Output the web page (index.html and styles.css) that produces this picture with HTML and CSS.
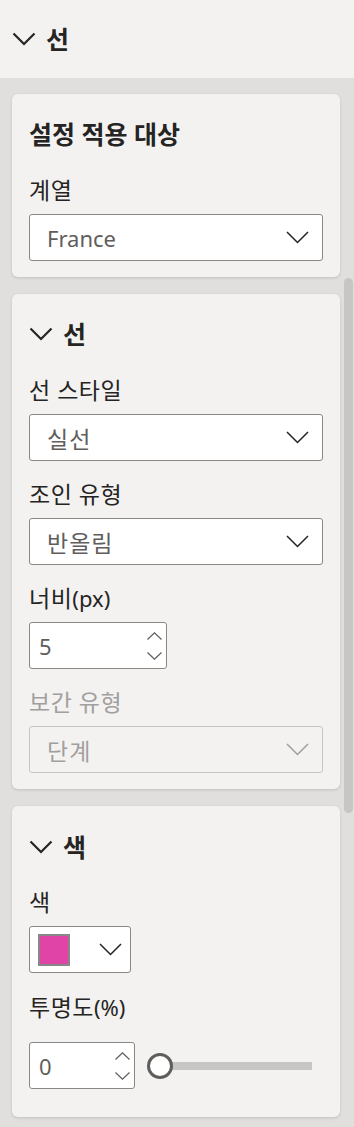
FILE: index.html
```html
<!DOCTYPE html>
<html lang="ko">
<head>
<meta charset="utf-8">
<link rel="stylesheet" href="styles.css">
</head>
<body>
<div class="page">
  <header class="top">
    <svg class="chev-lg" width="24" height="14" viewBox="0 0 24 14"><path d="M1.5 1.5 L12 12 L22.5 1.5"/></svg>
    <span class="top-title">선</span>
  </header>
  <main class="pane">
    <section class="card">
      <h2 class="card-title">설정 적용 대상</h2>
      <div class="field field-first">
        <div class="label">계열</div>
        <div class="dropdown"><span>France</span><svg class="chev-sm" width="23" height="13" viewBox="0 0 23 13"><path d="M1 1 L11.5 11.5 L22 1"/></svg></div>
      </div>
    </section>

    <section class="card">
      <div class="card-head">
        <svg class="chev-lg" width="24" height="14" viewBox="0 0 24 14"><path d="M1.5 1.5 L12 12 L22.5 1.5"/></svg>
        <span class="card-title">선</span>
      </div>
      <div class="field field-first">
        <div class="label">선 스타일</div>
        <div class="dropdown"><span class="ko">실선</span><svg class="chev-sm" width="23" height="13" viewBox="0 0 23 13"><path d="M1 1 L11.5 11.5 L22 1"/></svg></div>
      </div>
      <div class="field">
        <div class="label">조인 유형</div>
        <div class="dropdown"><span class="ko">반올림</span><svg class="chev-sm" width="23" height="13" viewBox="0 0 23 13"><path d="M1 1 L11.5 11.5 L22 1"/></svg></div>
      </div>
      <div class="field">
        <div class="label">너비<span class="lat">(px)</span></div>
        <div class="spin spin-wide">
          <span class="spin-value">5</span>
          <div class="spin-arrows">
            <svg width="15" height="8" viewBox="0 0 15 8"><path d="M0.5 7.5 L7.5 0.8 L14.5 7.5"/></svg>
            <svg width="15" height="8" viewBox="0 0 15 8"><path d="M0.5 0.5 L7.5 7.2 L14.5 0.5"/></svg>
          </div>
        </div>
      </div>
      <div class="field disabled">
        <div class="label">보간 유형</div>
        <div class="dropdown"><span class="ko">단계</span><svg class="chev-sm" width="23" height="13" viewBox="0 0 23 13"><path d="M1 1 L11.5 11.5 L22 1"/></svg></div>
      </div>
    </section>

    <section class="card card-last">
      <div class="card-head">
        <svg class="chev-lg" width="24" height="14" viewBox="0 0 24 14"><path d="M1.5 1.5 L12 12 L22.5 1.5"/></svg>
        <span class="card-title">색</span>
      </div>
      <div class="field field-first-b">
        <div class="label">색</div>
        <div class="color-drop">
          <span class="swatch"></span>
          <svg class="chev-sm" width="23" height="13" viewBox="0 0 23 13"><path d="M1 1 L11.5 11.5 L22 1"/></svg>
        </div>
      </div>
      <div class="field field-op">
        <div class="label">투명도<span class="lat">(%)</span></div>
        <div class="slider-row">
          <div class="spin spin-narrow">
            <span class="spin-value">0</span>
            <div class="spin-arrows">
              <svg width="15" height="8" viewBox="0 0 15 8"><path d="M0.5 7.5 L7.5 0.8 L14.5 7.5"/></svg>
              <svg width="15" height="8" viewBox="0 0 15 8"><path d="M0.5 0.5 L7.5 7.2 L14.5 0.5"/></svg>
            </div>
          </div>
          <div class="slider">
            <span class="thumb"></span>
            <span class="track"></span>
          </div>
        </div>
      </div>
    </section>
  </main>
  <div class="scroll-thumb"></div>
</div>
</body>
</html>
```

FILE: styles.css
```css
* { box-sizing: border-box; }

html, body {
  margin: 0;
  padding: 0;
}

body {
  font-family: "Noto Sans", "Noto Sans CJK KR", sans-serif;
  background: #e1dfdd;
  color: #252423;
}

.page {
  position: relative;
  width: 354px;
  height: 1127px;
  overflow: hidden;
}

.top {
  height: 78px;
  background: #f3f2f1;
  display: flex;
  align-items: center;
  gap: 10px;
  padding-left: 12px;
}

.chev-lg path {
  fill: none;
  stroke: #252423;
  stroke-width: 2.2;
}

.top-title {
  font-size: 25px;
  font-weight: 700;
  line-height: 28px;
}

.pane {
  display: flex;
  flex-direction: column;
  gap: 17px;
  padding: 16px 14px 0 12px;
}

.card {
  width: 328px;
  background: #f3f2f1;
  border-radius: 6px;
  box-shadow: 0 1px 3px rgba(0, 0, 0, 0.14);
  padding: 26px 17px 16px 17px;
}

.card-title {
  margin: 0;
  font-size: 25px;
  font-weight: 700;
  line-height: 28px;
  color: #252423;
}

.card-head {
  display: flex;
  align-items: center;
  gap: 10px;
}

.card-last {
  padding-top: 27px;
  padding-bottom: 16px;
}

.field { margin-top: 19px; }
.field-first { margin-top: 28px; }
.field-first-b { margin-top: 27px; }

.label {
  font-size: 23px;
  line-height: 28px;
  letter-spacing: 0.5px;
  color: #252423;
  margin-bottom: 10px;
}

.label .lat {
  letter-spacing: 0;
  font-size: 22px;
}

.dropdown {
  height: 47px;
  border: 1px solid #8a8886;
  border-radius: 3px;
  background: #ffffff;
  display: flex;
  align-items: center;
  justify-content: space-between;
  padding: 0 13px 0 17px;
  font-size: 22px;
  color: #605e5c;
}

.ko {
  font-size: 23px;
  letter-spacing: 1px;
}

.chev-sm path {
  fill: none;
  stroke: #252423;
  stroke-width: 1.5;
}

.disabled .label { color: #a19f9d; }
.disabled .dropdown {
  background: #f3f2f1;
  border-color: #c8c6c4;
  color: #a19f9d;
}
.disabled .chev-sm path { stroke: #a19f9d; }

.spin {
  height: 47px;
  border: 1px solid #8a8886;
  border-radius: 3px;
  background: #ffffff;
  display: flex;
  align-items: center;
  justify-content: space-between;
  padding: 0 4px 0 9px;
  font-size: 22px;
  color: #605e5c;
}

.spin-wide { width: 138px; }
.spin-narrow { width: 106px; flex: none; }

.spin-arrows {
  display: flex;
  flex-direction: column;
  gap: 12px;
}

.spin-arrows svg { display: block; }
.spin-arrows path {
  fill: none;
  stroke: #605e5c;
  stroke-width: 1.2;
}

.color-drop {
  width: 102px;
  height: 47px;
  border: 1px solid #8a8886;
  border-radius: 3px;
  background: #ffffff;
  display: flex;
  align-items: center;
  justify-content: space-between;
  padding: 0 8px 0 8px;
}

.swatch {
  width: 32px;
  height: 32px;
  border: 2px solid #8a8886;
  background: #e044a7;
}

.field-op { margin-top: 20px; }
.field-op .label { margin-bottom: 0; }

.slider-row {
  display: flex;
  align-items: center;
  padding: 21px 0 12px 0;
}

.slider {
  display: flex;
  align-items: center;
  margin-left: 12px;
}

.thumb {
  width: 26px;
  height: 26px;
  border-radius: 50%;
  border: 3px solid #605e5c;
  background: #ffffff;
  flex: none;
  position: relative;
  z-index: 1;
}

.track {
  width: 140px;
  height: 8px;
  background: #c8c6c4;
  margin-left: -1px;
}

.scroll-thumb {
  position: absolute;
  left: 344px;
  top: 278px;
  width: 9px;
  height: 535px;
  border-radius: 5px;
  background: #c8c6c4;
}
```
